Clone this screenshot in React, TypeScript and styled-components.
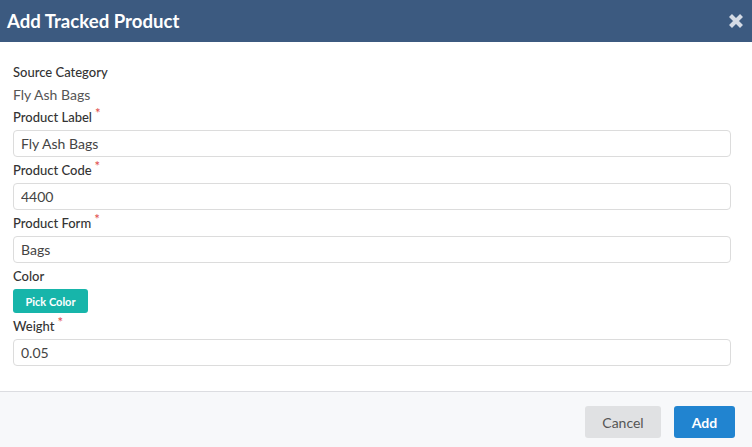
import styled, { createGlobalStyle } from "styled-components";

const GlobalStyle = createGlobalStyle`
  body {
    margin: 0;
    background: #ffffff;
    font-family: Lato, "Open Sans", sans-serif;
  }
  * { box-sizing: border-box; }
`;

const Modal = styled.div`
  width: 752px;
  height: 447px;
  display: flex;
  flex-direction: column;
  background: #fff;
`;

const Header = styled.header`
  height: 42px;
  background: #3c5a80;
  display: flex;
  align-items: center;
  justify-content: space-between;
  padding: 0 8px 0 7px;
`;

const Title = styled.h1`
  margin: 0;
  font-size: 18.6px;
  font-weight: 700;
  color: #fff;
`;

const Close = styled.button`
  border: 0;
  background: none;
  padding: 0;
  width: 16px;
  height: 16px;
  display: flex;
  cursor: pointer;
`;

const Body = styled.div`
  flex: 1;
  padding: 20px 21px 0 13px;
  display: flex;
  flex-direction: column;
`;

const Label = styled.div<{ $gap?: number }>`
  font-size: 13px;
  font-weight: 500;
  color: #333;
  line-height: 20px;
  margin-bottom: ${(p) => p.$gap ?? 3}px;
`;

const Star = styled.span`
  color: #e04848;
  font-size: 13px;
  vertical-align: top;
  margin-left: 3px;
  line-height: 13px;
`;

const Value = styled.div`
  font-size: 14px;
  color: #555;
  line-height: 20px;
  margin: 3px 0 2px;
`;

const Input = styled.input`
  width: 100%;
  height: 27px;
  border: 1px solid #dcdcdc;
  border-radius: 4px;
  padding: 0 7px;
  font-family: Lato, "Open Sans", sans-serif;
  font-size: 14px;
  color: #444;
  margin-bottom: 3px;
  outline: none;
`;

const PickButton = styled.button`
  align-self: flex-start;
  width: 75px;
  height: 24px;
  border: 0;
  border-radius: 3px;
  background: #17b5aa;
  color: #fff;
  font-family: Lato, "Open Sans", sans-serif;
  font-size: 11px;
  font-weight: 700;
  margin-bottom: 3px;
`;

const Footer = styled.footer`
  height: 56px;
  border-top: 1px solid #dcdde1;
  background: #f7f8fa;
  display: flex;
  justify-content: flex-end;
  align-items: flex-start;
  gap: 13px;
  padding: 14px 17px 0 0;
`;

const FooterButton = styled.button<{ $primary?: boolean }>`
  height: 32px;
  border: 0;
  border-radius: 3px;
  padding: 0;
  width: ${(p) => (p.$primary ? 61 : 76)}px;
  background: ${(p) => (p.$primary ? "#2184d0" : "#e0e1e3")};
  color: ${(p) => (p.$primary ? "#fff" : "#555")};
  font-family: Lato, "Open Sans", sans-serif;
  font-size: 14px;
  font-weight: ${(p) => (p.$primary ? 700 : 400)};
`;

const fields = [
  { label: "Product Label", value: "Fly Ash Bags" },
  { label: "Product Code", value: "4400" },
  { label: "Product Form", value: "Bags" },
];

export default function App() {
  return (
    <>
      <GlobalStyle />
      <Modal>
        <Header>
          <Title>Add Tracked Product</Title>
          <Close aria-label="close">
            <svg width="16" height="16" viewBox="0 0 16 16">
              <path d="M2.5 2.5 L13.5 13.5 M13.5 2.5 L2.5 13.5" stroke="#d5dbe5" strokeWidth="4.2" />
            </svg>
          </Close>
        </Header>
        <Body>
          <Label $gap={0}>Source Category</Label>
          <Value>Fly Ash Bags</Value>
          {fields.map((f) => (
            <div key={f.label}>
              <Label>
                {f.label}
                <Star>*</Star>
              </Label>
              <Input defaultValue={f.value} />
            </div>
          ))}
          <Label>Color</Label>
          <PickButton>Pick Color</PickButton>
          <Label>
            Weight<Star>*</Star>
          </Label>
          <Input defaultValue="0.05" />
        </Body>
        <Footer>
          <FooterButton>Cancel</FooterButton>
          <FooterButton $primary>Add</FooterButton>
        </Footer>
      </Modal>
    </>
  );
}
